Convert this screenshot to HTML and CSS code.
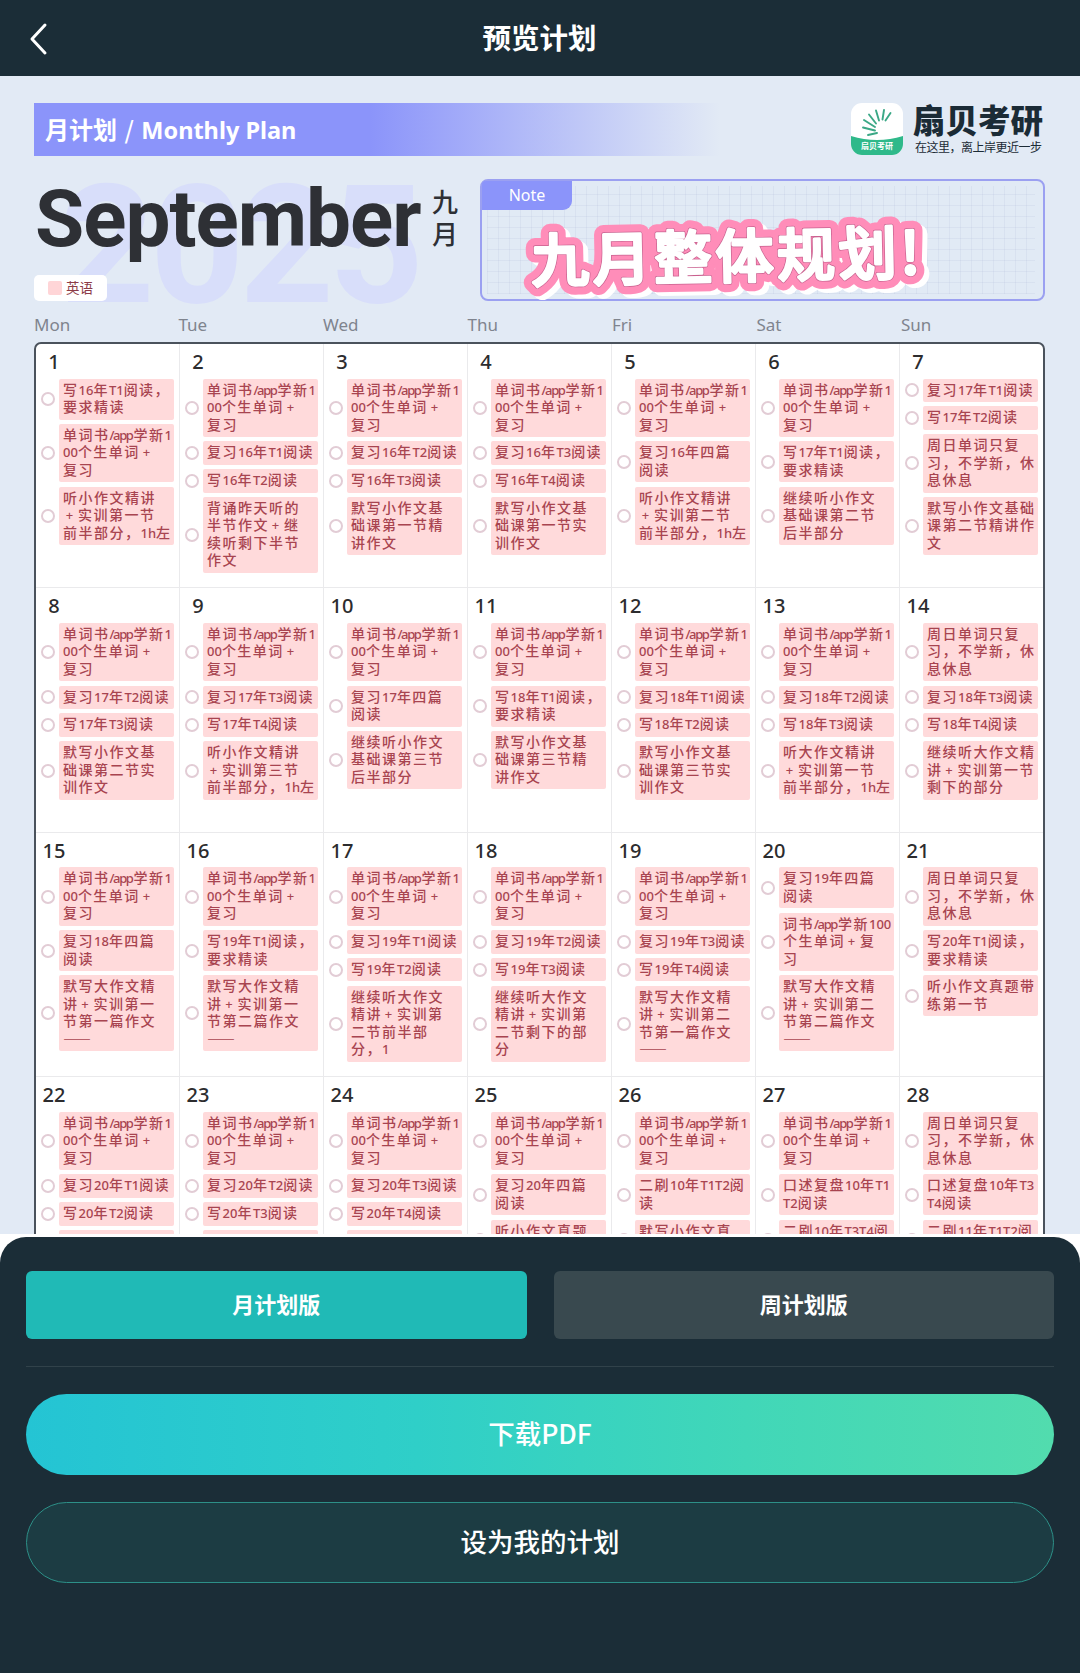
FILE: index.html
```html
<!DOCTYPE html>
<html lang="zh-CN">
    <head>
        <meta charset="utf-8">
        <title>预览计划</title>
        <link rel="stylesheet" href="styles.css">
    </head>
    <body>
        <div class="main-container">
            <header class="top-bar">
                <svg class="back" viewBox="0 0 24 36"><path d="M19 4 L6 18 L19 32"/></svg>
                <h1>预览计划</h1>
            </header>
            <div class="preview">
                <div class="plan-head">
                    <div class="banner">月计划 <b>/</b> <span>Monthly Plan</span></div>
                    <div class="brand">
                        <svg class="brand-icon" viewBox="0 0 52 52">
                            <rect width="52" height="52" rx="11" fill="#fff"/>
                            <path d="M0 33 Q26 41 52 33 V41 A11 11 0 0 1 41 52 H11 A11 11 0 0 1 0 41 Z" fill="#2fb98a"/>
                            <g stroke="#3aa886" stroke-width="1.9" stroke-linecap="round">
                                <path d="M26 30 L17 32"/>
                                <path d="M24 27.5 L12 24.5"/>
                                <path d="M24 24 L13 17"/>
                                <path d="M25 20.5 L18 11.5"/>
                                <path d="M28 17.5 L25 7.5"/>
                                <path d="M31.5 16.5 L33 7"/>
                                <path d="M34.5 17.5 L39.5 10"/>
                            </g>
                            <text x="26" y="46" text-anchor="middle">扇贝考研</text>
                        </svg>
                        <div class="brand-text">
                            <strong>扇贝考研</strong>
                            <small>在这里，离上岸更近一步</small>
                        </div>
                    </div>
                </div>
                <div class="month-head">
                    <div class="month">
                        <div class="year">2025</div>
                        <div class="month-name">
                            <h2>September</h2>
                            <div class="month-cn">九<br>月</div>
                        </div>
                        <div class="legend"><i></i>英语</div>
                    </div>
                    <div class="note">
                        <div class="note-tab">Note</div>
                        <svg class="note-title" viewBox="0 0 420 100">
                            <g transform="rotate(-1.2 210 50)">
                                <text class="t-shadow" x="26" y="77">九月整体规划!</text>
                                <text class="t-outline" x="21" y="73">九月整体规划!</text>
                                <text class="t-line" x="21" y="73">九月整体规划!</text>
                                <text class="t-fill" x="21" y="73">九月整体规划!</text>
                            </g>
                        </svg>
                    </div>
                </div>
                <div class="week">
                    <span>Mon</span><span>Tue</span><span>Wed</span><span>Thu</span><span>Fri</span><span>Sat</span><span>Sun</span>
                </div>
                <div class="calendar" id="calendar"></div>
            </div>
            <div class="panel">
                <div class="tabs">
                    <button class="tab active">月计划版</button>
                    <button class="tab">周计划版</button>
                </div>
                <hr>
                <button class="btn download">下载PDF</button>
                <button class="btn apply">设为我的计划</button>
            </div>
        </div>
        <script src="plan.js"></script>
    </body>
</html>
```
FILE: styles.css
```css
* {
    box-sizing: border-box;
}
body {
    margin: 0;
    font-family: "Noto Sans", "Noto Sans CJK SC", sans-serif;
    background: #fff;
}
h1, h2 {
    margin: 0;
}
button {
    font-family: inherit;
    color: #fff;
    padding: 0;
}
.main-container {
    display: flex;
    flex-direction: column;
    height: 1673px;
    overflow: hidden;
}
.top-bar {
    display: flex;
    align-items: center;
    height: 76px;
    flex: none;
    padding: 0 26px;
    background: #1b2d37;
    color: #fff;
}
.top-bar h1 {
    flex: 1;
    margin-right: 25px;
    text-align: center;
    font-size: 28.5px;
    line-height: 40px;
    font-weight: 700;
}
.back {
    width: 24px;
    height: 36px;
    margin-top: 2px;
    fill: none;
    stroke: #fff;
    stroke-width: 3;
    stroke-linecap: round;
    stroke-linejoin: round;
}

/* 计划预览 */
.preview {
    height: 1158px;
    flex: none;
    overflow: hidden;
    padding: 27px 35px 0 34px;
    background: #e2eaf5;
}
.plan-head {
    display: flex;
    justify-content: space-between;
    height: 53px;
}
.banner {
    width: 700px;
    padding-left: 11px;
    font-family: "Noto Sans CJK SC", sans-serif;
    font-size: 24px;
    line-height: 51px;
    font-weight: 700;
    color: #fff;
    background: linear-gradient(90deg, #8b94fa 0%, #8b94fa 48%, rgba(139, 148, 250, 0) 98%);
}
.banner b {
    margin: 0 2px;
    font-weight: 500;
}
.banner span {
    font-family: "Noto Sans", sans-serif;
    font-size: 23.5px;
}
.brand {
    display: flex;
    gap: 10px;
}
.brand-icon {
    width: 52px;
    height: 52px;
}
.brand-icon text {
    font-size: 8px;
    font-weight: 700;
    fill: #fff;
}
.brand-text {
    display: flex;
    flex-direction: column;
    width: 132px;
    color: #1b2b36;
    white-space: nowrap;
}
.brand-text strong {
    font-size: 32.5px;
    line-height: 36px;
    font-weight: 900;
}
.brand-text small {
    padding-left: 2px;
    font-size: 12px;
    line-height: 18px;
    letter-spacing: -0.5px;
}
.month-head {
    display: flex;
    justify-content: space-between;
    height: 122px;
    margin-top: 23px;
}
.month {
    position: relative;
    display: flex;
    flex-direction: column;
    justify-content: space-between;
    align-items: flex-start;
    width: 440px;
}
.year {
    position: absolute;
    left: 26px;
    top: -13px;
    font-family: Roboto, sans-serif;
    font-size: 165px;
    line-height: 160px;
    font-weight: 700;
    letter-spacing: -5px;
    color: #d8defa;
}
.month-name {
    position: relative;
    display: flex;
    gap: 12px;
    height: 80px;
}
.month-name h2 {
    width: 386px;
    padding: 1px 0 0 1px;
    font-family: Roboto, sans-serif;
    font-size: 80px;
    line-height: 78px;
    font-weight: 700;
    letter-spacing: -1px;
    color: #2e3035;
}
.month-cn {
    padding-top: 7px;
    font-size: 26px;
    line-height: 32px;
    font-weight: 500;
    color: #2e3035;
}
.legend {
    position: relative;
    display: flex;
    align-items: center;
    gap: 4px;
    width: 73px;
    height: 26px;
    padding-left: 14px;
    border-radius: 5px;
    background: #fff;
    font-size: 13.5px;
    line-height: 20px;
    color: #8c3c48;
}
.legend i {
    width: 14px;
    height: 14px;
    border-radius: 2px;
    background: #ffd5d7;
}
.note {
    position: relative;
    width: 565px;
    border: 2px solid #9ba0f1;
    border-radius: 8px;
    background:
        repeating-linear-gradient(90deg, rgba(150, 160, 200, 0.12) 0 1px, transparent 1px 11px) 5px 5px / 548px 108px no-repeat,
        repeating-linear-gradient(0deg, rgba(150, 160, 200, 0.12) 0 1px, transparent 1px 11px) 5px 5px / 548px 108px no-repeat,
        #e1eaf5;
}
.note-tab {
    width: 90px;
    height: 29px;
    border-radius: 4px 0 9px 0;
    background: #8b94fa;
    color: #fff;
    font-size: 16px;
    line-height: 28px;
    text-align: center;
}
.note-title {
    position: absolute;
    left: 28px;
    top: 24px;
    width: 420px;
    height: 100px;
    overflow: visible;
}
.note-title text {
    font-family: "Noto Sans CJK SC", sans-serif;
    font-size: 58px;
    font-weight: 500;
    letter-spacing: 3.5px;
    stroke-linejoin: round;
    stroke-linecap: round;
}
.t-shadow {
    fill: #fff;
    stroke: #fff;
    stroke-width: 19;
}
.t-outline {
    fill: #ff8db9;
    stroke: #ff8db9;
    stroke-width: 19;
}
.t-line {
    fill: #c9618f;
    stroke: #c9618f;
    stroke-width: 4.4;
}
.t-fill {
    fill: #fff;
    stroke: #fff;
    stroke-width: 3;
}
.week {
    display: flex;
    height: 41px;
    padding-top: 11px;
    font-size: 17px;
    line-height: 25px;
    color: #7f848e;
}
.week span {
    flex: none;
    width: 144.5px;
}

/* 日历 */
.calendar {
    display: grid;
    grid-template-columns: repeat(6, 144px) 1fr;
    grid-auto-rows: 244.4px;
    border: 2px solid #4a525c;
    border-radius: 7px;
    background: #fff;
    font-family: "Noto Sans CJK SC", sans-serif;
}
.day {
    padding: 8px 5px 0 5px;
    border-right: 1px solid #eaeaec;
    border-bottom: 1px solid #eaeaec;
}
.day:nth-child(7n) {
    border-right: none;
}
.day-num {
    width: 26px;
    height: 26.5px;
    font-family: "Noto Sans", sans-serif;
    font-size: 20px;
    line-height: 20px;
    font-weight: 500;
    text-align: center;
    color: #2c2c2e;
}
.task {
    display: flex;
    align-items: center;
    gap: 4px;
    margin-bottom: 4.3px;
}
.task i {
    flex: none;
    width: 14px;
    height: 14px;
    border: 2px solid #e2ccd5;
    border-radius: 50%;
}
.task p {
    flex: 1;
    margin: 0;
    padding: 2px 0 4px 4px;
    border-radius: 2px;
    background: #ffdadb;
    color: #a84450;
    font-size: 14px;
    line-height: 17.5px;
    font-weight: 500;
    letter-spacing: 1.5px;
    white-space: nowrap;
}
.task span {
    font-family: "Noto Sans", sans-serif;
    font-size: 13px;
    line-height: 1;
    letter-spacing: 0;
}
.task .app {
    letter-spacing: -1.4px;
    margin-right: 1px;
}
.task .plus {
    display: inline-block;
    width: 15px;
    padding-right: 2px;
    text-align: center;
}

/* 底部操作 */
.panel {
    flex: 1;
    margin-top: 3px;
    padding: 34px 26px 0;
    border-radius: 26px 26px 0 0;
    background: #1b2d37;
}
.tabs {
    display: flex;
    gap: 27px;
}
.tab {
    flex: 1;
    height: 68px;
    padding-bottom: 5px;
    border: none;
    border-radius: 6px;
    background: #39494f;
    font-size: 22px;
    font-weight: 700;
}
.tab.active {
    background: #20bab6;
}
.panel hr {
    height: 1px;
    margin: 27px 0 27px;
    border: none;
    background: #31424a;
}
.btn {
    display: block;
    width: 100%;
    height: 81px;
    padding-bottom: 5px;
    border: none;
    border-radius: 41px;
    font-size: 26.5px;
    font-weight: 600;
}
.download {
    font-family: "Noto Sans CJK SC", sans-serif;
    font-weight: 500;
    background: linear-gradient(90deg, #24c4d4, #2fcfc8 38%, #41d7b8 70%, #52dcae);
}
.apply {
    margin-top: 27px;
    border: 1.5px solid #2d9088;
    background: #1c3c43;
    font-weight: 500;
}
```
FILE: plan.js
```js
var W = '单词书/app学新1|00个生单词+|复习';
var S = '周日单词只复|习，不学新，休|息休息';

// 每天的任务，"|" 表示换行
var days = [
    ['写16年T1阅读，|要求精读', W, '听小作文精讲|+实训第一节|前半部分，1h左'],
    [W, '复习16年T1阅读', '写16年T2阅读', '背诵昨天听的|半节作文+继|续听剩下半节|作文'],
    [W, '复习16年T2阅读', '写16年T3阅读', '默写小作文基|础课第一节精|讲作文'],
    [W, '复习16年T3阅读', '写16年T4阅读', '默写小作文基|础课第一节实|训作文'],
    [W, '复习16年四篇|阅读', '听小作文精讲|+实训第二节|前半部分，1h左'],
    [W, '写17年T1阅读，|要求精读', '继续听小作文|基础课第二节|后半部分'],
    ['复习17年T1阅读', '写17年T2阅读', S, '默写小作文基础|课第二节精讲作|文'],

    [W, '复习17年T2阅读', '写17年T3阅读', '默写小作文基|础课第二节实|训作文'],
    [W, '复习17年T3阅读', '写17年T4阅读', '听小作文精讲|+实训第三节|前半部分，1h左'],
    [W, '复习17年四篇|阅读', '继续听小作文|基础课第三节|后半部分'],
    [W, '写18年T1阅读，|要求精读', '默写小作文基|础课第三节精|讲作文'],
    [W, '复习18年T1阅读', '写18年T2阅读', '默写小作文基|础课第三节实|训作文'],
    [W, '复习18年T2阅读', '写18年T3阅读', '听大作文精讲|+实训第一节|前半部分，1h左'],
    [S, '复习18年T3阅读', '写18年T4阅读', '继续听大作文精|讲+实训第一节|剩下的部分'],

    [W, '复习18年四篇|阅读', '默写大作文精|讲+实训第一|节第一篇作文|——'],
    [W, '写19年T1阅读，|要求精读', '默写大作文精|讲+实训第一|节第二篇作文|——'],
    [W, '复习19年T1阅读', '写19年T2阅读', '继续听大作文|精讲+实训第|二节前半部|分，1'],
    [W, '复习19年T2阅读', '写19年T3阅读', '继续听大作文|精讲+实训第|二节剩下的部|分'],
    [W, '复习19年T3阅读', '写19年T4阅读', '默写大作文精|讲+实训第二|节第一篇作文|——'],
    ['复习19年四篇|阅读', '词书/app学新100|个生单词+复|习', '默写大作文精|讲+实训第二|节第二篇作文|——'],
    [S, '写20年T1阅读，|要求精读', '听小作文真题带|练第一节'],

    [W, '复习20年T1阅读', '写20年T2阅读', '默写小作文真|题'],
    [W, '复习20年T2阅读', '写20年T3阅读', '听小作文真题|带练'],
    [W, '复习20年T3阅读', '写20年T4阅读', '默写小作文真|题'],
    [W, '复习20年四篇|阅读', '听小作文真题|带练'],
    [W, '二刷10年T1T2阅|读', '默写小作文真|题'],
    [W, '口述复盘10年T1|T2阅读', '二刷10年T3T4阅|读'],
    [S, '口述复盘10年T3|T4阅读', '二刷11年T1T2阅|读']
];

function format(text) {
    return text
        .replace(/\/app|\+|[A-Za-z0-9]+/g, function (m) {
            var cls = m === '/app' ? 'app' : m === '+' ? 'plus' : 'en';
            return '<span class="' + cls + '">' + m + '</span>';
        })
        .replace(/\|/g, '<br>');
}

document.getElementById('calendar').innerHTML = days.map(function (tasks, i) {
    return '<div class="day"><div class="day-num">' + (i + 1) + '</div>' +
        tasks.map(function (t) {
            return '<div class="task"><i></i><p>' + format(t) + '</p></div>';
        }).join('') + '</div>';
}).join('');
```
